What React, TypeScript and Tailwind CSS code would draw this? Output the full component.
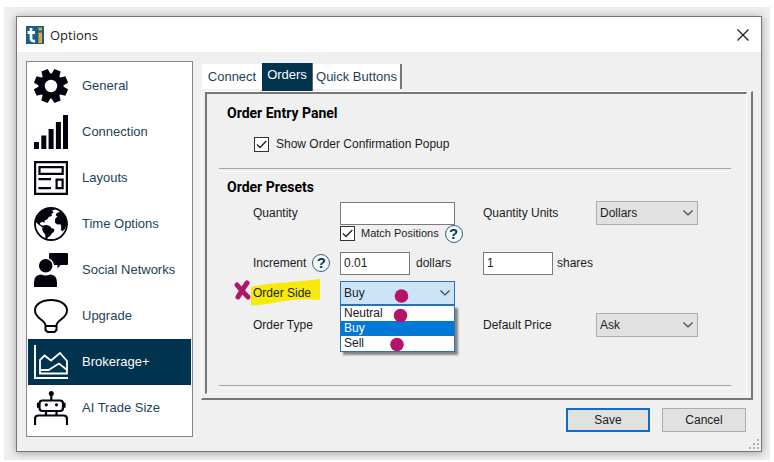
import { useState } from 'react';
import type { ReactNode } from 'react';

function GearIcon() {
  return (
    <svg viewBox="0 0 34 34" className="size-[34px]" aria-hidden="true">
      {[22.5, 67.5, 112.5, 157.5].map((angle) => (
        <path key={angle} transform={`rotate(${angle} 17 17)`} d="M13.6 0h6.8l1 7v20l-1 7h-6.8l-1-7V7z" fill="#03030d" />
      ))}
      <circle cx="17" cy="17" r="12.5" fill="#03030d" />
      <circle cx="17" cy="17" r="6.2" fill="#fff" />
    </svg>
  );
}

function SignalIcon() {
  return (
    <svg viewBox="0 0 34 34" className="size-[34px]" fill="#03030d" aria-hidden="true">
      <path d="M0 27h5v7H0zM7.3 20.5h5V34h-5zM14.6 14h5v20h-5zM21.9 7h5v27h-5zM29 0h5v34h-5z" />
    </svg>
  );
}

function LayoutIcon() {
  return (
    <svg viewBox="0 0 34 34" className="size-[34px]" fill="none" stroke="#03030d" strokeWidth="2.2" aria-hidden="true">
      <path d="M1.1 1.1h31.8v31.8H1.1zM5.5 6.2h23.2v6.6H5.5zM4.4 18.2H17M4.4 27.2H17M22.6 18.6h6v8.6h-6z" />
    </svg>
  );
}

function GlobeIcon() {
  return (
    <svg viewBox="0 0 34 34" className="size-[34px]" aria-hidden="true">
      <circle cx="17" cy="17" r="16" fill="#fff" stroke="#03030d" strokeWidth="1.8" />
      <g fill="#03030d">
        <path d="M3.5 9 8 4l6-2.5 5-.2 2 1.2-3 1.1 1.6 1.8-2.4 1.8 1 1.6-3.4 1.3-1.5 2.2-2.5 1.2-.4 2.3-2-1.1-2.5 1.2.8 2 2.4.8 1.6 2-3-.8-3.2-2.4-2.6-2.2L1 13z" />
        <path d="m9.2 18.6 3.7-.7 3.2 1.3 1.1 1.8 3 .9-.1 2.5-2.3 2.1-1.6 2.6-2.4 1.4-.6 2.3-1.8-1.1-.2-4.1-2.2-3-.9-2.7z" />
        <path d="m25.2 5.2-2.5.8-1 2.3 1.7 1.3-2.2 2.1-.3 3.7 2.3 2.2 3.1-.4 1 2.2-.4 3 1.3 2.1 2.7-2.6L33 17l-.6-5-2.6-5.2-3.3-3.2z" />
      </g>
    </svg>
  );
}

function SocialIcon() {
  return (
    <svg viewBox="0 0 34 34" className="size-[34px]" fill="#03030d" aria-hidden="true">
      <path d="M16 0h17q1 0 1 1v10q0 1-1 1h-6.5L23.5 15.5V12H20q-.6-4.7-5-6.6V1q0-1 1-1z" />
      <circle cx="11.7" cy="12.7" r="6.8" />
      <path d="M0 34v-4.5Q0 22 7 21.5q4.5 2.2 9.500 0Q23 22 23 29.500V34z" />
    </svg>
  );
}

function BulbIcon() {
  return (
    <svg viewBox="0 0 34 34" className="size-[34px]" fill="none" stroke="#03030d" strokeWidth="2" aria-hidden="true">
      <path d="M11.500 26.500C11.500 20.500 1 20 1 11.500 1 5 8 1 17 1s16 4 16 10.500c0 8.500-10.500 9-10.500 15v4.500l-2 2h-7l-2-2zM11.500 27h11" />
    </svg>
  );
}

function AreaChartIcon() {
  return (
    <svg viewBox="0 0 34 34" className="size-[34px]" fill="none" stroke="#fff" strokeWidth="1.8" aria-hidden="true">
      <path d="M1 0v33h33" strokeWidth="2" />
      <path d="M6 15l4.500-4.500 6.500 5L26 8l7 8v12.500H6zM6 25h8.500L25 18.500l8 6.500" />
    </svg>
  );
}

function RobotIcon() {
  return (
    <svg viewBox="0 0 34 34" className="size-[34px]" fill="none" stroke="#03030d" strokeWidth="2.2" aria-hidden="true">
      <circle cx="17.3" cy="2.5" r="2.5" fill="#03030d" stroke="none" />
      <path d="M17.300 3v6M8.500 9.500h17.500q3 0 3 3V17q0 3-3 3H8.500q-3 0-3-3v-4.500q0-3 3-3zM4 11.700v5M30.500 11.700v5M12 20v4.500M22.500 20v4.500M1 34v-6q0-3.500 3.500-3.500h25q3.500 0 3.500 3.500v6" />
      <circle cx="12.3" cy="13.8" r="1.6" fill="#03030d" stroke="none" />
      <circle cx="22.5" cy="13.8" r="1.6" fill="#03030d" stroke="none" />
    </svg>
  );
}

const sections = [
  { name: 'General', Icon: GearIcon },
  { name: 'Connection', Icon: SignalIcon },
  { name: 'Layouts', Icon: LayoutIcon },
  { name: 'Time Options', Icon: GlobeIcon },
  { name: 'Social Networks', Icon: SocialIcon },
  { name: 'Upgrade', Icon: BulbIcon },
  { name: 'Brokerage+', Icon: AreaChartIcon },
  { name: 'AI Trade Size', Icon: RobotIcon },
];

function HelpButton({ topic }: { topic: string }) {
  return (
    <button
      type="button"
      aria-label={`Help: ${topic}`}
      className="flex size-[18px] shrink-0 items-center justify-center rounded-full border border-[#33627a] bg-[#f4fafc] text-[15px] leading-4 font-bold text-[#0b3950]"
    >
      ?
    </button>
  );
}

function Check({ id, children, small }: { id: string; children: ReactNode; small?: boolean }) {
  return (
    <div className={`flex items-center ${small ? 'gap-1.5' : 'gap-[7px]'}`}>
      <span className="relative flex size-[15px] shrink-0">
        <input id={id} type="checkbox" defaultChecked className="peer size-[15px] appearance-none border border-[#333] bg-white" />
        <svg viewBox="0 0 15 15" className="pointer-events-none absolute inset-0 hidden peer-checked:block" fill="none" stroke="#222" strokeWidth="1.3" aria-hidden="true">
          <path d="m3 7.500 3 3L12.300 4" />
        </svg>
      </span>
      <label htmlFor={id} className={small ? 'text-[11px]' : ''}>
        {children}
      </label>
    </div>
  );
}

function Select({ id, value, options, open }: { id: string; value: string; options: string[]; open?: boolean }) {
  return (
    <div className={open ? 'relative w-[115px]' : 'relative w-[102px]'}>
      <select
        id={id}
        defaultValue={value}
        className={`h-6 w-full appearance-none border pl-[3px] ${open ? 'border-[#2773b8] bg-[#cce4f7]' : 'border-[#adadad] bg-[#e1e1e1]'}`}
      >
        {options.map((option) => (
          <option key={option}>{option}</option>
        ))}
      </select>
      <svg viewBox="0 0 10 6" className="pointer-events-none absolute top-[9px] right-[5px] h-[6px] w-[10px]" fill="none" stroke="#444" strokeWidth="1.2" aria-hidden="true">
        <path d="m.5.500 4.500 4.500L9.500.500" />
      </svg>
      {open && (
        <ul className="absolute top-6 left-0 z-10 w-full border border-[#2773b8] bg-white leading-[15px] shadow-[3px_3px_2px_rgba(0,0,0,0.45)]">
          {options.map((option) => (
            <li key={option} className={`pl-[3px] ${option === value ? 'bg-[#0078d7] text-white' : ''}`}>
              {option}
            </li>
          ))}
        </ul>
      )}
      {open && (
        <svg viewBox="0 0 115 72" className="pointer-events-none absolute top-0 left-0 z-20 h-[72px] w-[115px]" fill="#b5136a" aria-hidden="true">
          <circle cx="61.500" cy="15" r="6.800" />
          <circle cx="60.500" cy="34.500" r="6.800" />
          <circle cx="57" cy="63.500" r="6.800" />
        </svg>
      )}
    </div>
  );
}

function Divider() {
  return <hr className="mr-[15px] ml-3 h-1 border-t border-b border-t-[#a5a5a5] border-b-[#fafafa]" />;
}

const row = 'grid h-6 grid-cols-[87px_143px_113px_1fr] items-center pl-[46px]';
const field = 'h-[23px] border border-[#7a7a7a] bg-white px-[3px]';
const heading = "pl-5 font-[Roboto,'Liberation_Sans',sans-serif] text-sm leading-5 font-bold text-black";

function OrdersForm() {
  return (
    <form className="pt-[9px] pb-1 text-xs">
      <h2 className={heading}>Order Entry Panel</h2>
      <div className="mt-[11px] flex h-5 items-center pl-[47px]">
        <Check id="confirm">Show Order Confirmation Popup</Check>
      </div>
      <div className="mt-[14px]">
        <Divider />
      </div>
      <h2 className={`mt-[5px] ${heading}`}>Order Presets</h2>
      <div className={`mt-1 ${row}`}>
        <label htmlFor="quantity">Quantity</label>
        <input id="quantity" type="text" className={`w-[115px] ${field}`} />
        <label htmlFor="units">Quantity Units</label>
        <Select id="units" value="Dollars" options={['Dollars', 'Shares']} />
      </div>
      <div className="flex h-[17px] items-center gap-1.5 pl-[133px]">
        <Check id="match" small>
          Match Positions
        </Check>
        <HelpButton topic="Match Positions" />
      </div>
      <div className={`mt-[9px] ${row}`}>
        <div className="flex items-center gap-1.5">
          <label htmlFor="increment">Increment</label>
          <HelpButton topic="Increment" />
        </div>
        <div className="flex items-center gap-1.5">
          <input id="increment" type="text" defaultValue="0.01" className={`w-[70px] ${field}`} />
          <span>dollars</span>
        </div>
        <div className="col-span-2 flex items-center gap-1">
          <input id="shares" type="text" defaultValue="1" className={`w-[70px] ${field}`} />
          <label htmlFor="shares">shares</label>
        </div>
      </div>
      <div className={`mt-1.5 ${row}`}>
        <div className="relative">
          <svg viewBox="0 0 90 34" className="pointer-events-none absolute -top-2 -left-5 h-[34px] w-[90px]" aria-hidden="true">
            <path d="M18 10q13-3 27-4t42-4v21q-22-2-42 2t-27 3z" fill="#f7ea0b" />
            <path d="M4 8q5 6 11 12M14 6Q9 13 5 20" fill="none" stroke="#ad1765" strokeWidth="5" strokeLinecap="round" />
          </svg>
          <label htmlFor="side" className="relative">
            Order Side
          </label>
        </div>
        <Select id="side" value="Buy" options={['Neutral', 'Buy', 'Sell']} open />
      </div>
      <div className={`mt-2 ${row}`}>
        <span>Order Type</span>
        <span />
        <label htmlFor="price">Default Price</label>
        <Select id="price" value="Ask" options={['Ask', 'Bid']} />
      </div>
      <div className="mt-12">
        <Divider />
      </div>
    </form>
  );
}

export default function App() {
  const [section, setSection] = useState('Brokerage+');
  return (
    <div className="bg-white px-1 pt-[7px] pb-[2px] font-['Liberation_Sans',Arial,sans-serif] text-[13px] leading-4 text-[#1c1c1c]">
      <div className="bg-[#f1efee] pt-[9px] pr-2 pb-2 pl-3">
        <main className="relative border border-[#777] bg-[#f0f0f0] shadow-[0_1px_8px_rgba(0,0,0,0.35)]">
          <header className="flex h-[35px] items-center bg-white pr-3 pl-[9px]">
            <svg viewBox="0 0 18 18" className="size-[18px]" aria-hidden="true">
              <path fill="#155f88" d="M0 0h18v18H0z" />
              <path d="M5 2v10.500q0 3 4 2.500M1.500 6.500H9" stroke="#fff" strokeWidth="2.800" fill="none" />
              <path d="M12.500 1.500h3.500v3h-3.500zM12.500 6.500h3.500V17h-3.500z" fill="#f0a32e" />
            </svg>
            <h1 className="ml-1.5 font-['Open_Sans','Noto_Sans',sans-serif] text-[13px] leading-5">Options</h1>
            <button type="button" aria-label="Close" className="ml-auto">
              <svg viewBox="0 0 12 12" className="size-3" stroke="#222" strokeWidth="1.3" aria-hidden="true">
                <path d="m.5.500 11 11M11.500.500l-11 11" />
              </svg>
            </button>
          </header>
          <div className="flex gap-2 pt-[9px] pr-2 pb-[14px] pl-[9px]">
            <nav className="w-[167px] shrink-0 border border-[#828790] bg-white px-px pt-px pb-[5px]">
              {sections.map(({ name, Icon }) => (
                <button
                  key={name}
                  type="button"
                  onClick={() => setSection(name)}
                  className={`flex h-[46px] w-full items-center gap-3.5 pl-1.5 ${name === section ? 'bg-[#00334e] text-white' : 'text-[#1d4358]'}`}
                >
                  <Icon />
                  {name}
                </button>
              ))}
            </nav>
            <div className="min-w-0 flex-1">
              <div role="tablist" className="flex h-[30px] items-end pl-px text-[#1d4358]">
                <button type="button" role="tab" aria-selected="false" className="h-[27px] w-[60px] border-b-2 border-[#f0f0f0] bg-white">
                  Connect
                </button>
                <button type="button" role="tab" aria-selected="true" className="h-[28px] w-[51px] border-r border-[#666] bg-[#00334e] pb-1 text-white">
                  Orders
                </button>
                <button type="button" role="tab" aria-selected="false" className="mb-0.5 h-[25px] w-[89px] border-r-2 border-[#777] bg-white">
                  Quick Buttons
                </button>
              </div>
              <div className="border-t border-r-2 border-b-2 border-l border-t-white border-r-[#777] border-b-[#777] border-l-white pr-1 pb-1 pl-[3px]">
                <section className="border-t-2 border-r border-b border-l-2 border-t-[#777] border-r-[#fafafa] border-b-[#fafafa] border-l-[#777]">
                  <OrdersForm />
                </section>
              </div>
              <footer className="flex justify-end gap-3 pt-2 pr-[7px] text-xs">
                <button type="button" className="h-6 w-[84px] border-2 border-[#0a6ccb] bg-[#e1e1e1]">
                  Save
                </button>
                <button type="button" className="h-6 w-[84px] border border-[#adadad] bg-[#e1e1e1]">
                  Cancel
                </button>
              </footer>
            </div>
          </div>
          <svg viewBox="0 0 10 10" className="absolute right-0.5 bottom-0.5 size-2.5" fill="#b4b4b4" aria-hidden="true">
            <path d="M8 0h2v2H8zM8 4h2v2H8zM8 8h2v2H8zM4 4h2v2H4zM4 8h2v2H4zM0 8h2v2H0z" />
          </svg>
        </main>
      </div>
    </div>
  );
}
